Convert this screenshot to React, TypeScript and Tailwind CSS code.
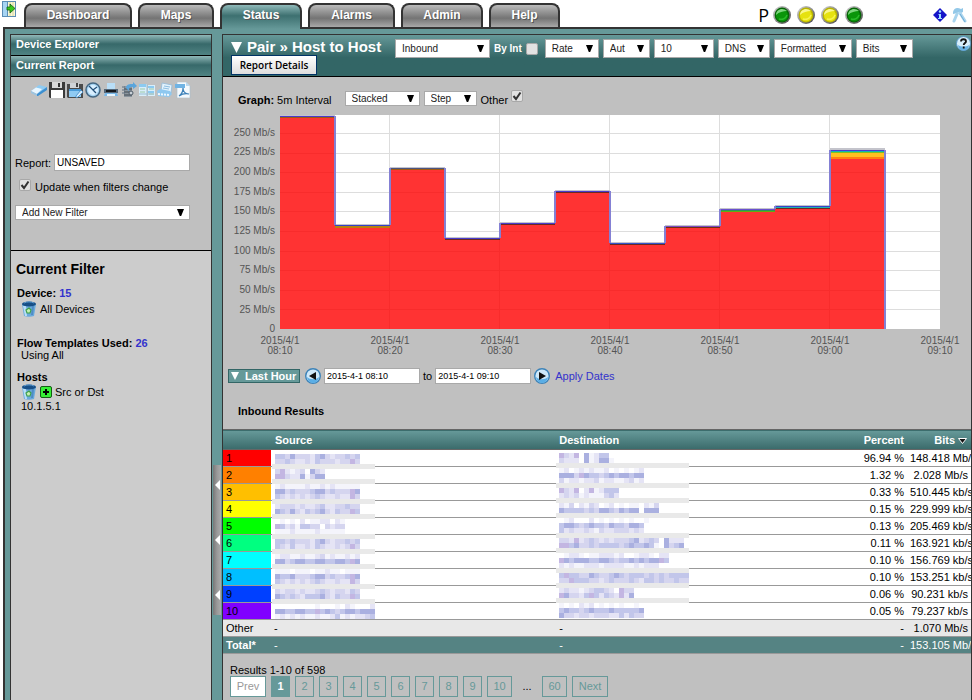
import { useId } from "react";
import type { ReactNode } from "react";

const tabs = [
  { label: "Dashboard", width: "w-[108px]" },
  { label: "Maps", width: "w-[76px]" },
  { label: "Status", width: "w-[82px]", active: true },
  { label: "Alarms", width: "w-[87px]" },
  { label: "Admin", width: "w-[82px]" },
  { label: "Help", width: "w-[71px]" },
];

const rows = [
  { color: "bg-[#ff0000]", percent: "96.94 %", bits: "148.418 Mb/s" },
  { color: "bg-[#ff8000]", percent: "1.32 %", bits: "2.028 Mb/s" },
  { color: "bg-[#ffbf00]", percent: "0.33 %", bits: "510.445 kb/s" },
  { color: "bg-[#ffff00]", percent: "0.15 %", bits: "229.999 kb/s" },
  { color: "bg-[#00ff00]", percent: "0.13 %", bits: "205.469 kb/s" },
  { color: "bg-[#00ff80]", percent: "0.11 %", bits: "163.921 kb/s" },
  { color: "bg-[#00ffff]", percent: "0.10 %", bits: "156.769 kb/s" },
  { color: "bg-[#00bfff]", percent: "0.10 %", bits: "153.251 kb/s" },
  { color: "bg-[#0040ff]", percent: "0.06 %", bits: "90.231 kb/s" },
  { color: "bg-[#8000ff]", percent: "0.05 %", bits: "79.237 kb/s" },
];

// "-" is a separator strip, letters are mosaic shades
const sourceMosaic = [
  "ddcecccbdecbccdcd", "ccdcbbcbdcccbccvc", "-",
  "cvbabc ecb", "vvcbbeacee", "-",
  "abaaaabaababaaaaa", "eecdcccdeecdcccve", "dcbcbcbcdcbbcbbvc", "-",
  "bcccbcbbcdbbccdcc", "edcecbdcdecbdccvd", "-",
  " a a b aabb ba", "vdbcaddcc cbcc", "aaabaaaabaaaaa", "-",
  "ddcdcccbdecbccdcd", "dcbdbbcbdcbbcbcvc", "-",
  "abbaabaabcabaabab", "eecdeeddeeddeedve", "-",
  "aaa aaa aabaa aaa", "eddecccdeecdccdve", "dcbcbcbcdcbbcbbvc", "-",
  "cbccbcbbcdcbccbdc", "edcdcbdddecbdccvd", "-",
  "        a   a ba   b", "eeddeeddvdedcdeedeee", "abababaabaabdababbcd",
];

const destinationMosaic = [
  "vcbv eabdd", "cbbb eabeea", "-",
  "ab ababaab a a ab", "eeecveddcdedeedee", "cabbabbcabbaabcab", "-",
  "vcbv bvabddd", "bcbcabaaacdb", "-",
  "bac bacb ab a aa bac", "eddddcdceedcedee eee", "-",
  " ab   b a a a a  a", "deedcdeddceddceed", "dbcbbcbacbbcccbcb", "-",
  "ccbvbcdcbcbcccdebcdc ebbb", "vvdeccdcddddcdeddeda ecde", "-",
  " abba aabbbab  abba bb", "vedeeeddeedcddededeevd", "babaabbbabbbbaababbb", "-",
  "dvddccedccdedcdddcdcdcdddd", "ccvdddccbcdcccdcbddcdccdcc", "-",
  "bcbbabcddcb vcc", "veccbdvdbdcbvbe", "-",
  "a a bab a a a  a", "deddcdedddeddddde", "eccbccbcccbbdbdcc",
];

const shades: Record<string, string> = {
  a: "#f4f4fb",
  b: "#e5e4f5",
  c: "#d5d5ef",
  d: "#c2c6ea",
  e: "#aab0e0",
  v: "#c3b6e2",
};

function Mosaic({ lines, columns, className }: { lines: string[]; columns: number; className: string }) {
  return (
    <svg
      width={columns * 5 + 3}
      height={lines.length * 5}
      shapeRendering="crispEdges"
      className={`pointer-events-none absolute left-px ${className}`}
      aria-hidden="true"
    >
      {lines.map((line, y) =>
        line === "-" ? (
          <rect key={y} x="0" y={y * 5} width="100%" height="5" fill="#e9e9e9" />
        ) : (
          line.split("").map((c, x) =>
            shades[c] ? (
              <rect key={`${y}-${x}`} x={x * 5 + 3} y={y * 5} width="5" height="5" fill={shades[c]} />
            ) : null
          )
        )
      )}
    </svg>
  );
}

function Select({ label, value, className }: { label: string; value: string; className: string }) {
  return (
    <span className={`relative inline-block shrink-0 ${className}`}>
      <select
        aria-label={label}
        defaultValue={value}
        className="block h-full w-full appearance-none rounded-none border border-[#a9a9a9] bg-white pl-[6px] text-[10px] leading-3 text-[#222]"
      >
        <option>{value}</option>
      </select>
      <svg viewBox="0 0 7 7" className="pointer-events-none absolute inset-y-0 right-[6px] my-auto h-[7px] w-[7px]">
        <path d="M0 0h7L4.200 7h-1.400z" fill="#000" />
      </svg>
    </span>
  );
}

function Check({ label, checked, id }: { label?: string; checked?: boolean; id?: string }) {
  return (
    <span className="relative inline-block h-3 w-3 shrink-0">
      <input
        id={id}
        type="checkbox"
        aria-label={label}
        defaultChecked={checked}
        className="peer block h-3 w-3 appearance-none rounded-[2px] border border-[#a8a8a8] bg-[#e2e2e2]"
      />
      <svg viewBox="0 0 12 12" className="pointer-events-none absolute inset-0 hidden h-3 w-3 peer-checked:block">
        <path d="M2.500 6l2.500 3 4.500-6.500" fill="none" stroke="#333" strokeWidth="2" />
      </svg>
    </span>
  );
}

function IconButton({ label, children }: { label: string; children: ReactNode }) {
  return (
    <button type="button" aria-label={label} className="h-4 w-4">
      <svg viewBox="0 0 16 16" className="h-4 w-4">{children}</svg>
    </button>
  );
}

function Toolbar() {
  return (
    <div className="flex gap-[2px] pl-4">
      <IconButton label="Clear">
        <path d="M0 9l8-6 8 2-8 7z" fill="#8ecbf3" />
        <path d="M0 9l5-3.500 6 1.500-5 5z" fill="#e9f6ff" />
        <path d="M0 9l6 3v2L0 11z" fill="#9cc4e0" />
        <path d="M6 12l10-7v3l-9 6H6z" fill="#3d8fd0" />
      </IconButton>
      <IconButton label="Save">
        <path d="M0 0h16v16H1l-1-1z" fill="#3a3a3a" />
        <path d="M3 0h10v6H3z" fill="#d8d8d8" />
        <path d="M9 1h2v4H9z" fill="#333" />
        <path d="M2 8h12v8H2z" fill="#fff" />
      </IconButton>
      <IconButton label="Save as">
        <path d="M0 2h16v14H1l-1-1z" fill="#4b4b4b" />
        <path d="M3 1h9v5H3z" fill="#d0d4d8" />
        <path d="M9 1h2v4H9z" fill="#444" />
        <path d="M2 7h12v8H2z" fill="#8fcaf2" />
        <path d="M2 7h12v2H2z" fill="#4a9bd8" />
        <path d="M9 14l5-6 2 2-5 5-2 1z" fill="#d9efff" stroke="#2b78b8" strokeWidth=".7" />
      </IconButton>
      <IconButton label="Schedule">
        <circle cx="8" cy="8" r="7" fill="#a6d3f2" stroke="#456782" strokeWidth="1.500" />
        <circle cx="8" cy="8" r="5" fill="#d9efff" />
        <path d="M4 4l4 4 4-3M8 8l3 3" fill="none" stroke="#234f78" strokeWidth="1.300" />
      </IconButton>
      <IconButton label="Print">
        <path d="M4 1h8v6H4z" fill="#b9def7" />
        <path d="M1 7h14v4H1z" fill="#55687a" />
        <path d="M3 8h10v2H3z" fill="#15191e" />
        <path d="M2 11h12l1 3H1z" fill="#78b8e8" />
        <path d="M4 12h8v2H4z" fill="#e5f5ff" />
      </IconButton>
      <IconButton label="Export to server">
        <path d="M3 4h8v11H3z" fill="#8b959e" />
        <path d="M3 7h8M3 10h8M3 13h8" stroke="#414b54" />
        <path d="M1 5h3M1 8h3M1 11h3" stroke="#5c6f80" />
        <path d="M5 6c0-4 4-4 7-4V0l4 4-4 3V5c-3 0-4 0-4 4z" fill="#5aa5dc" />
        <circle cx="10" cy="11" r="2" fill="#c9d1d8" stroke="#4c5965" />
      </IconButton>
      <IconButton label="Layout">
        <path d="M0 2h8v12H0zM9 3h7v11H9z" fill="#d8eefb" />
        <path d="M0 2h7v3H0zM9 4h6v2H9zM9 9h6v2H9z" fill="#8ccaf0" />
        <path d="M1 7h5M1 10h5M10 7h5M10 12h5" stroke="#9cc9a8" />
        <path d="M8 2v12M0 12h15" stroke="#9dbdd0" />
      </IconButton>
      <IconButton label="Email report">
        <path d="M5 1l10 2-1 8-10-2z" fill="#e3f3fd" stroke="#8fb9d8" strokeWidth=".8" />
        <path d="M7 4l6 1M6 6l6 1" stroke="#8cbde0" />
        <path d="M0 9l3-2 10 2 2 3-3 3-11-1z" fill="#8ec8f0" />
        <path d="M1 12l11 1" stroke="#eef8ff" strokeWidth="2" strokeDasharray="2 1" />
      </IconButton>
      <IconButton label="Save as PDF">
        <path d="M2 0h9l4 4v12H2z" fill="#f4f9fd" stroke="#a6bccd" strokeWidth=".6" />
        <path d="M0 2h10v4H0z" fill="#6fb3e4" />
        <path d="M11 0v4h4z" fill="#b9d8ee" />
        <path d="M4 14c3-2 4-5 4-8 0 4 3 6 6 6-4-1-7 0-10 2z" fill="none" stroke="#3c80b8" strokeWidth="1.200" />
      </IconButton>
    </div>
  );
}

function TrashIcon() {
  return (
    <svg viewBox="0 0 16 16" className="h-4 w-4 shrink-0">
      <path d="M1 3h14l-2 12c-3 1-7 1-10 0z" fill="#69a9dc" />
      <path d="M2 5h3l1 10H4z" fill="#b8def8" />
      <path d="M11 5h2l-1 9h-2z" fill="#4f8cc5" />
      <ellipse cx="8" cy="3" rx="7" ry="2.500" fill="#174f87" />
      <path d="M3 2c3-1.500 7-1.500 10 0" fill="none" stroke="#5d9bd0" />
      <path d="M8 7l2 2-1 3H6L5 9z" fill="#c5efb2" stroke="#3f9f4c" strokeWidth="1.200" />
    </svg>
  );
}

function Orb({ color }: { color: "green" | "yellow" }) {
  const id = useId();
  const green = color === "green";
  return (
    <svg viewBox="0 0 18 18" className="h-[18px] w-[18px]">
      <defs>
        <linearGradient id={id} x1="0" y1="0" x2="1" y2="1">
          <stop offset="0" stopColor="#d8d8d8" />
          <stop offset="1" stopColor="#444" />
        </linearGradient>
      </defs>
      <circle cx="9" cy="9" r="9" fill={`url(#${id})`} />
      <circle cx="9" cy="9" r="7.400" fill={green ? "#066606" : "#b8b400"} />
      <circle cx="9" cy="9.500" r="6" fill={green ? "#0a950a" : "#e6e210"} />
      <path d="M3 9c0-6 7-8 11-4-4 0-8 1-11 4z" fill={green ? "#7ed67e" : "#f9f78c"} />
      <path d="M6 13c4 1 7-1 8-4" fill="none" stroke={green ? "#2bbb2b" : "#f6f450"} strokeWidth="1.500" />
    </svg>
  );
}

function ArrowBall({ label, flip }: { label: string; flip?: boolean }) {
  return (
    <button type="button" aria-label={label} className="h-4 w-4 shrink-0">
      <svg viewBox="0 0 16 16" className={flip ? "h-4 w-4 -scale-x-100" : "h-4 w-4"}>
        <circle cx="8" cy="8" r="7.300" fill="#cfe9fa" stroke="#3d83b8" strokeWidth="1.400" />
        <path d="M2 9a6 6 0 0 0 12 0c-3 3-9 3-12 0z" fill="#5aaee6" />
        <path d="M12 8L5 4v8z" fill="#111" />
      </svg>
    </button>
  );
}

function Header() {
  return (
    <header className="flex h-[27px] items-end">
      <a href="#home" aria-label="Home" className="ml-[2px] w-[22px] self-start pt-px">
        <svg viewBox="0 0 14 16" className="h-4 w-[14px]">
          <path d="M0 0h14v16H0z" fill="#5b8db5" />
          <path d="M1 1h4v14H1z" fill="#a7d4f3" />
          <path d="M6 1h7v14H6z" fill="#f8f7d4" />
          <path d="M8 1v14M11 1v14" stroke="#d8d4a0" />
          <path d="M5 6h3V3l5 4.500L8 12V9H5z" fill="#39c91d" stroke="#116011" strokeWidth=".8" />
        </svg>
      </a>
      <nav className="flex items-end gap-[6px]">
        {tabs.map((tab) => (
          <a
            key={tab.label}
            href={`#${tab.label.toLowerCase()}`}
            className={`rounded-t-lg border-2 border-b-0 border-[#333] text-center text-xs leading-5 font-bold text-white [text-shadow:1px_1px_0_#555] ${tab.width} ${
              tab.active
                ? "relative -mb-[2px] h-[26px] bg-linear-to-b from-[#8fbaba] via-[#3d7070] via-45% to-[#669999]"
                : "h-6 bg-linear-to-b from-[#bbb] via-[#747474] via-60% to-[#a9a9a9]"
            }`}
          >
            {tab.label}
          </a>
        ))}
      </nav>
      <div className="ml-auto flex h-[27px] items-center gap-[6px] pt-[3px] pr-1">
        <span className="font-['Open_Sans',sans-serif] text-lg leading-5">P</span>
        <div className="-ml-[2px] flex gap-[6px]">
          <Orb color="green" />
          <Orb color="yellow" />
          <Orb color="yellow" />
          <Orb color="green" />
        </div>
        <a href="#info" aria-label="Information" className="ml-16">
          <svg viewBox="0 0 14 14" className="h-[14px] w-[14px]">
            <path d="M7 0l7 7-7 7-7-7z" fill="#1414c8" />
            <circle cx="7" cy="3.500" r="1.200" fill="#9fe0ff" />
            <path d="M5.500 6H8v4h1v1H5v-1h1V7h-.5z" fill="#9fe0ff" />
          </svg>
        </a>
        <a href="#tools" aria-label="Tools" className="-ml-px">
          <svg viewBox="0 0 16 16" className="h-4 w-4">
            <path d="M1 5c1-4 4-5 8-3l2-1v4l-2 1-1-1c-2 1-4 1-7 2z" fill="#93c8e8" />
            <path d="M5 7l-3 7M8 6l5 8" stroke="#a9d4ee" strokeWidth="3" strokeLinecap="round" />
            <path d="M8 7l5 8" stroke="#6fadd6" />
          </svg>
        </a>
      </div>
    </header>
  );
}

function SideHeading({ children }: { children: ReactNode }) {
  return (
    <button
      type="button"
      className="block h-[21px] w-full border-b border-black bg-linear-to-b from-[#90b8b8] via-[#37696a] via-45% to-[#508383] pb-[2px] pl-[5px] text-left font-bold text-white"
    >
      {children}
    </button>
  );
}

function Sidebar() {
  return (
    <aside className="w-[202px] shrink-0 border-x border-t border-[#333] bg-[#ccc]">
      <SideHeading>Device Explorer</SideHeading>
      <SideHeading>Current Report</SideHeading>
      <div className="h-[174px] border-b border-black bg-[#c0c0c0] pt-[5px] pl-1">
        <Toolbar />
        <div className="mt-14 flex items-center gap-[3px]">
          <label htmlFor="report">Report:</label>
          <input
            id="report"
            defaultValue="UNSAVED"
            className="h-[17px] w-[136px] border border-[#a9a9a9] bg-white px-[2px] text-[10px]"
          />
        </div>
        <div className="mt-2 flex items-start gap-1 pl-1">
          <Check id="update" checked />
          <label htmlFor="update" className="pt-[2px] leading-3">
            Update when filters change
          </label>
        </div>
        <Select label="Add filter" value="Add New Filter" className="mt-3 h-[15px] w-[175px]" />
      </div>
      <div className="pt-[10px] pl-[6px] leading-3">
        <h2 className="-ml-px text-sm leading-4 font-bold">Current Filter</h2>
        <p className="mt-[10px] font-bold">
          Device: <a href="#devices" className="text-[#3333cc]">15</a>
        </p>
        <div className="flex h-5 items-center gap-[3px] pl-1">
          <TrashIcon />
          All Devices
        </div>
        <p className="mt-[18px] font-bold">
          Flow Templates Used: <a href="#templates" className="text-[#3333cc]">26</a>
        </p>
        <p className="pl-1">Using All</p>
        <p className="mt-[10px] font-bold">Hosts</p>
        <div className="flex h-[18px] items-center gap-[3px] pl-1">
          <TrashIcon />
          <button type="button" aria-label="Add host" className="h-3 w-3 rounded-[2px] border border-[#145c14] bg-[#35ee35]">
            <svg viewBox="0 0 10 10" className="block h-[10px] w-[10px]">
              <path d="M5 2v6M2 5h6" stroke="#000" strokeWidth="2" />
            </svg>
          </button>
          Src or Dst
        </div>
        <p className="pl-1 leading-[10px]">10.1.5.1</p>
      </div>
    </aside>
  );
}

function Splitter() {
  return (
    <div className="w-[10px] shrink-0 pl-px">
      <button
        type="button"
        aria-label="Collapse sidebar"
        className="mt-[431px] flex h-[150px] w-2 flex-col items-center justify-between bg-linear-to-r from-[#777] via-[#999] to-[#aaa] py-[15px]"
      >
        {[0, 1, 2].map((i) => (
          <svg key={i} viewBox="0 0 5 10" className="h-[10px] w-[5px]">
            <path d="M5 0v10L0 5z" fill="#fff" />
          </svg>
        ))}
      </button>
    </div>
  );
}

function ReportHeader() {
  return (
    <div className="flex h-[42px] items-start border-b border-black bg-linear-to-b from-[#669999] to-[#336666] to-55% pl-2">
      <div className="w-[164px] shrink-0">
        <h1 className="flex h-5 items-center gap-[5px] pt-1 text-[15px] leading-4 font-bold whitespace-nowrap text-white">
          <svg viewBox="0 0 11 11" className="h-[11px] w-[11px]">
            <path d="M0 0h11L5.500 11z" fill="#fff" />
          </svg>
          Pair » Host to Host
        </h1>
        <button
          type="button"
          className="block h-5 w-[86px] border border-[#003366] bg-linear-to-b from-white to-[#ddd] font-['Open_Sans',sans-serif] text-[10px] font-semibold"
        >
          Report Details
        </button>
      </div>
      <div className="flex min-w-0 items-center gap-1 pt-1">
        <Select label="Direction" value="Inbound" className="h-[19px] w-[95px]" />
        <label htmlFor="by-int" className="text-[10px] font-bold whitespace-nowrap text-white">By Int</label>
        <Check id="by-int" />
        <Select label="Rate" value="Rate" className="ml-[3px] h-[19px] w-[54px]" />
        <Select label="Interval" value="Aut" className="h-[19px] w-[47px]" />
        <Select label="Row count" value="10" className="h-[19px] w-[60px]" />
        <Select label="Name resolution" value="DNS" className="h-[19px] w-[52px]" />
        <Select label="Format" value="Formatted" className="h-[19px] w-[78px]" />
        <Select label="Unit" value="Bits" className="h-[19px] w-[57px]" />
      </div>
      <a href="#help" aria-label="Help" className="mt-px ml-auto shrink-0">
        <svg viewBox="0 0 15 15" className="h-[15px] w-[15px]">
          <circle cx="7.500" cy="7.500" r="7" fill="#d9effc" stroke="#5796c4" />
          <path d="M2 9a5.500 5.500 0 0 0 11 0c-3 2-8 2-11 0z" fill="#68b2e4" />
          <path d="M5 5.500c0-3 5-3 5 0 0 1.500-2.300 1.600-2.300 3.500M7.700 10.500v2" fill="none" stroke="#111" strokeWidth="1.800" />
        </svg>
      </a>
    </div>
  );
}

const yLabels = ["250 Mb/s", "225 Mb/s", "200 Mb/s", "175 Mb/s", "150 Mb/s", "125 Mb/s", "100 Mb/s", "75 Mb/s", "50 Mb/s", "25 Mb/s", "0"];
const xLabels = ["08:10", "08:20", "08:30", "08:40", "08:50", "09:00", "09:10"];

// top: y of the total line; bands: [colour, thickness] stacked below it
const steps: { top: number; bands: [string, number][] }[] = [
  { top: 1, bands: [["#4a3ccc", 1], ["#a05a10", 1]] },
  { top: 110, bands: [["#3340cc", 1], ["#b88010", 2]] },
  { top: 53, bands: [["#4d5580", 1], ["#a05a10", 1]] },
  { top: 123, bands: [["#4a3ccc", 1], ["#6b2a20", 1]] },
  { top: 108, bands: [["#4a3ccc", 1], ["#6b2a20", 1]] },
  { top: 76, bands: [["#4a3ccc", 1], ["#6b2a20", 1]] },
  { top: 128, bands: [["#3355cc", 1], ["#6b2a20", 1]] },
  { top: 111, bands: [["#7a4cc0", 1], ["#703010", 1]] },
  { top: 94, bands: [["#6a50d0", 1], ["#309060", 1], ["#60b010", 1]] },
  { top: 91, bands: [["#3344cc", 1], ["#20b0b0", 1], ["#6b2a20", 1]] },
  { top: 35, bands: [["#4a3ccc", 1], ["#10b8b0", 1], ["#80c020", 1], ["#ffc020", 4], ["#ff8010", 2]] },
];

function Plot() {
  return (
    <svg viewBox="0 0 660 214" preserveAspectRatio="none" shapeRendering="crispEdges" className="block h-[214px] w-full bg-white">
      {yLabels.map((_, i) => (
        <rect key={i} x="0" y={Math.round(18 + i * 19.6)} width="660" height="1" fill="#ddd" />
      ))}
      {[1, 2, 3, 4, 5].map((i) => (
        <rect key={i} x={i * 110 - 1} y="0" width="1" height="214" fill="#ddd" />
      ))}
      {steps.map((s, i) => (
        <rect key={i} x={i * 55} y={s.top} width="55" height={214 - s.top} fill="#ff0000" fillOpacity=".8" />
      ))}
      {steps.map((s, i) => {
        const grey = i === 10 ? 2 : 1;
        let y = s.top;
        return (
          <g key={i}>
            <rect x={i * 55} y={s.top - grey} width="55" height={grey} fill="#c4c4cc" />
            {s.bands.map(([color, size], n) => {
              const band = <rect key={n} x={i * 55} y={y} width="55" height={size} fill={color} />;
              y += size;
              return band;
            })}
          </g>
        );
      })}
      {steps.map((s, i) => {
        const next = steps[i + 1]?.top ?? 214;
        return (
          <rect key={i} x={(i + 1) * 55 - 1} y={Math.min(s.top, next)} width="2" height={Math.abs(next - s.top)} fill="#8480d4" />
        );
      })}
    </svg>
  );
}

function Graph() {
  return (
    <section>
      <div className="flex h-[38px] items-center pt-2 pl-[15px]">
        <b>Graph:</b>&nbsp;5m Interval
        <Select label="Graph type" value="Stacked" className="mb-[3px] ml-[13px] h-[15px] w-[75px]" />
        <Select label="Line style" value="Step" className="mb-[3px] ml-1 h-[15px] w-[53px]" />
        <label htmlFor="other" className="mr-[3px] ml-1">Other</label>
        <span className="mb-2 flex">
          <Check id="other" checked />
        </span>
      </div>
      <div className="flex pr-[31px] text-[10px] text-[#545454]">
        <div className="mt-2 flex h-[216px] w-[57px] shrink-0 flex-col pr-[5px] text-right">
          {yLabels.map((label) => (
            <span key={label} className="flex flex-1 items-center justify-end">{label}</span>
          ))}
        </div>
        <div className="min-w-0 flex-1">
          <Plot />
          <div className="mt-[7px] flex justify-between leading-[10px]">
            {xLabels.map((time) => (
              <div key={time} className="flex w-0 justify-center text-center whitespace-nowrap">
                <span>2015/4/1<br />{time}</span>
              </div>
            ))}
          </div>
        </div>
      </div>
    </section>
  );
}

function DateRange() {
  return (
    <div className="mt-[11px] flex h-[17px] items-center pl-[5px]">
      <button
        type="button"
        className="mr-[5px] flex h-[14px] w-[72px] shrink-0 items-center gap-[6px] border border-[#336666] bg-[#669999] pl-[2px] leading-3 font-bold text-white"
      >
        <svg viewBox="0 0 8 8" className="h-2 w-2">
          <path d="M0 0h8L4 8z" fill="#fff" />
        </svg>
        Last Hour
      </button>
      <ArrowBall label="Earlier" flip />
      <input aria-label="From" defaultValue="2015-4-1 08:10" className="ml-[3px] h-4 w-24 border border-[#a9a9a9] bg-white px-[2px] text-[9px]" />
      <span className="mx-[3px]">to</span>
      <input aria-label="To" defaultValue="2015-4-1 09:10" className="mr-[3px] h-4 w-24 border border-[#a9a9a9] bg-white px-[2px] text-[9px]" />
      <ArrowBall label="Later" />
      <a href="#apply" className="ml-[5px] text-[#3333cc]">Apply Dates</a>
    </div>
  );
}

function Results() {
  return (
    <table className="mt-[10px] w-full table-fixed border-collapse text-left leading-4 whitespace-nowrap">
      <thead>
        <tr className="h-5 border-y border-[#666] bg-linear-to-b from-[#669999] to-[#3b6c6c] text-white">
          <th className="w-12" aria-label="Rank" />
          <th className="w-[38%] pl-1">Source</th>
          <th className="pl-1">Destination</th>
          <th className="w-[60px] pr-[2px] text-right">Percent</th>
          <th className="w-[65px] pr-1 text-right">
            Bits
            <svg viewBox="0 0 9 6" className="ml-[3px] inline h-[6px] w-[9px]">
              <path d="M.5.5h8L4.500 5.500z" fill="#111" stroke="#fff" />
            </svg>
          </th>
        </tr>
      </thead>
      <tbody>
        {rows.map((row, i) => (
          <tr key={row.bits} className="h-[17px] border-b border-[#999] bg-white">
            <td className={`pl-[3px] text-black ${row.color}`}>{i + 1}</td>
            <td className="relative">
              {i === 0 && <Mosaic lines={sourceMosaic} columns={20} className="top-1" />}
            </td>
            <td className="relative">
              {i === 0 && <Mosaic lines={destinationMosaic} columns={26} className="top-[3px]" />}
            </td>
            <td className="pr-[2px] text-right">{row.percent}</td>
            <td className="pr-[3px] pl-1 text-right">{row.bits}</td>
          </tr>
        ))}
      </tbody>
      <tfoot>
        <tr className="h-[17px] border-b border-[#999] bg-[#e8e8e8]">
          <td className="pl-[3px]">Other</td>
          <td className="pl-[3px]">-</td>
          <td className="pl-1">-</td>
          <td className="pr-[2px] text-right">-</td>
          <td className="pr-[3px] pl-1 text-right">1.070 Mb/s</td>
        </tr>
        <tr className="h-[17px] border-b border-[#999] bg-[#558383] text-white">
          <td className="pl-[3px] font-bold">Total*</td>
          <td className="pl-[3px]">-</td>
          <td className="pl-1">-</td>
          <td className="pr-[2px] text-right">-</td>
          <td className="pr-[3px] pl-1 text-right">153.105 Mb/s</td>
        </tr>
      </tfoot>
    </table>
  );
}

function PageButton({ label, className }: { label: string; className: string }) {
  return (
    <button type="button" className={`h-[21px] border border-[#669999] leading-[19px] ${className}`}>
      {label}
    </button>
  );
}

function Pagination() {
  return (
    <div className="pt-[10px] pb-[2px] pl-[7px]">
      <p className="leading-3">Results 1-10 of 598</p>
      <div className="flex gap-[5px]">
        <PageButton label="Prev" className="w-9 bg-white text-[#999]" />
        <PageButton label="1" className="w-[19px] bg-[#669999] font-bold text-white" />
        {["2", "3", "4", "5", "6", "7", "8", "9"].map((n) => (
          <PageButton key={n} label={n} className="w-[19px] text-[#669999]" />
        ))}
        <PageButton label="10" className="w-[25px] text-[#669999]" />
        <span className="w-5 text-center leading-[21px]">...</span>
        <PageButton label="60" className="w-[25px] text-[#669999]" />
        <PageButton label="Next" className="w-9 text-[#669999]" />
      </div>
    </div>
  );
}

export default function App() {
  return (
    <div className="flex min-h-screen flex-col bg-white font-['Liberation_Sans',Arial,sans-serif] text-[11px] leading-4 text-black">
      <Header />
      <div className="ml-[3px] flex flex-1 border-t-2 border-l-2 border-[#333] bg-[#669999] pt-[5px] pl-[5px]">
        <Sidebar />
        <Splitter />
        <main className="min-w-0 flex-1 overflow-hidden border-x border-t border-[#333] bg-[#c0c0c0]">
          <ReportHeader />
          <Graph />
          <DateRange />
          <h2 className="mt-[19px] pl-[15px] font-bold">Inbound Results</h2>
          <Results />
          <Pagination />
        </main>
      </div>
    </div>
  );
}
